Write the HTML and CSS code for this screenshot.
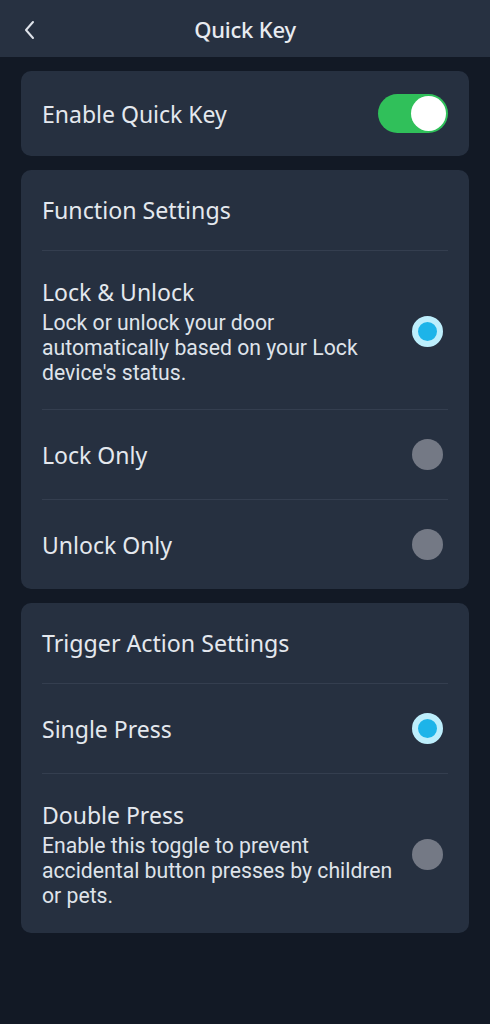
FILE: index.html
```html
<!DOCTYPE html>
<html lang="en">
<head>
    <meta charset="UTF-8">
    <meta name="viewport" content="width=device-width, initial-scale=1.0">
    <title>Quick Key</title>
    <link rel="stylesheet" href="styles.css">
</head>
<body>
    <header class="top-bar">
        <svg class="back-icon" width="14" height="22" viewBox="0 0 14 22">
            <path d="M11 3 L4 11 L11 19" fill="none" stroke="#dfe3ea" stroke-width="2" stroke-linecap="round" stroke-linejoin="round"/>
        </svg>
        <h1 class="title">Quick Key</h1>
    </header>

    <main class="content">
        <section class="card">
            <div class="row row-toggle">
                <span class="label">Enable Quick Key</span>
                <div class="toggle on"><div class="knob"></div></div>
            </div>
        </section>

        <section class="card">
            <div class="card-heading">Function Settings</div>
            <div class="row row-desc">
                <div class="text">
                    <div class="label">Lock &amp; Unlock</div>
                    <div class="desc">Lock or unlock your door<br>automatically based on your Lock<br>device's status.</div>
                </div>
                <div class="radio selected"></div>
            </div>
            <div class="row">
                <span class="label">Lock Only</span>
                <div class="radio"></div>
            </div>
            <div class="row">
                <span class="label">Unlock Only</span>
                <div class="radio"></div>
            </div>
        </section>

        <section class="card">
            <div class="card-heading">Trigger Action Settings</div>
            <div class="row">
                <span class="label">Single Press</span>
                <div class="radio selected"></div>
            </div>
            <div class="row row-desc">
                <div class="text">
                    <div class="label">Double Press</div>
                    <div class="desc">Enable this toggle to prevent<br>accidental button presses by children<br>or pets.</div>
                </div>
                <div class="radio"></div>
            </div>
        </section>
    </main>
</body>
</html>
```

FILE: styles.css
```css
body {
    margin: 0;
    padding: 0;
    background: #121925;
    color: #e4e8ee;
    font-family: "Noto Sans", "Open Sans", sans-serif;
    width: 490px;
    min-height: 1024px;
}

.top-bar {
    height: 57px;
    background: #273141;
    display: flex;
    align-items: center;
    justify-content: center;
    position: relative;
}

.back-icon {
    position: absolute;
    left: 22px;
    top: 19px;
}

.title {
    margin: 0;
    font-size: 22px;
    font-weight: 500;
    color: #e8ebf0;
    letter-spacing: -0.2px;
}

.content {
    padding: 14px 21px;
    display: flex;
    flex-direction: column;
    gap: 14px;
}

.card {
    background: #263040;
    border-radius: 10px;
    padding: 0 21px;
}

.card-heading {
    height: 80px;
    display: flex;
    align-items: center;
    font-size: 23.2px;
    letter-spacing: 0;
    border-bottom: 1px solid #343e4f;
}

.row {
    height: 89px;
    display: flex;
    align-items: center;
    justify-content: space-between;
    border-bottom: 1px solid #343e4f;
}

.row:last-child {
    border-bottom: none;
}

.row-toggle {
    height: 85px;
}

.row-desc {
    height: auto;
    padding: 26px 0 24px;
}

.row-desc:last-child {
    padding-bottom: 25px;
}

.label {
    font-size: 23px;
    line-height: 30px;
    letter-spacing: 0;
}

.text {
    width: 370px;
}

.desc {
    font-family: Roboto, "Noto Sans", sans-serif;
    font-size: 21.2px;
    line-height: 25px;
    margin-top: 3px;
    letter-spacing: 0;
    white-space: nowrap;
    color: #dfe3ea;
}

.toggle {
    width: 70px;
    height: 39px;
    border-radius: 20px;
    background: #30c05a;
    display: flex;
    align-items: center;
    justify-content: flex-end;
    padding: 0 2px;
    box-sizing: border-box;
}

.knob {
    width: 35px;
    height: 35px;
    border-radius: 50%;
    background: #ffffff;
}

.radio {
    width: 31px;
    height: 31px;
    border-radius: 50%;
    background: #747985;
    margin-right: 5px;
    flex-shrink: 0;
    box-sizing: border-box;
}

.radio.selected {
    background: #1db4e9;
    border: 6px solid #bdeefc;
}
```
